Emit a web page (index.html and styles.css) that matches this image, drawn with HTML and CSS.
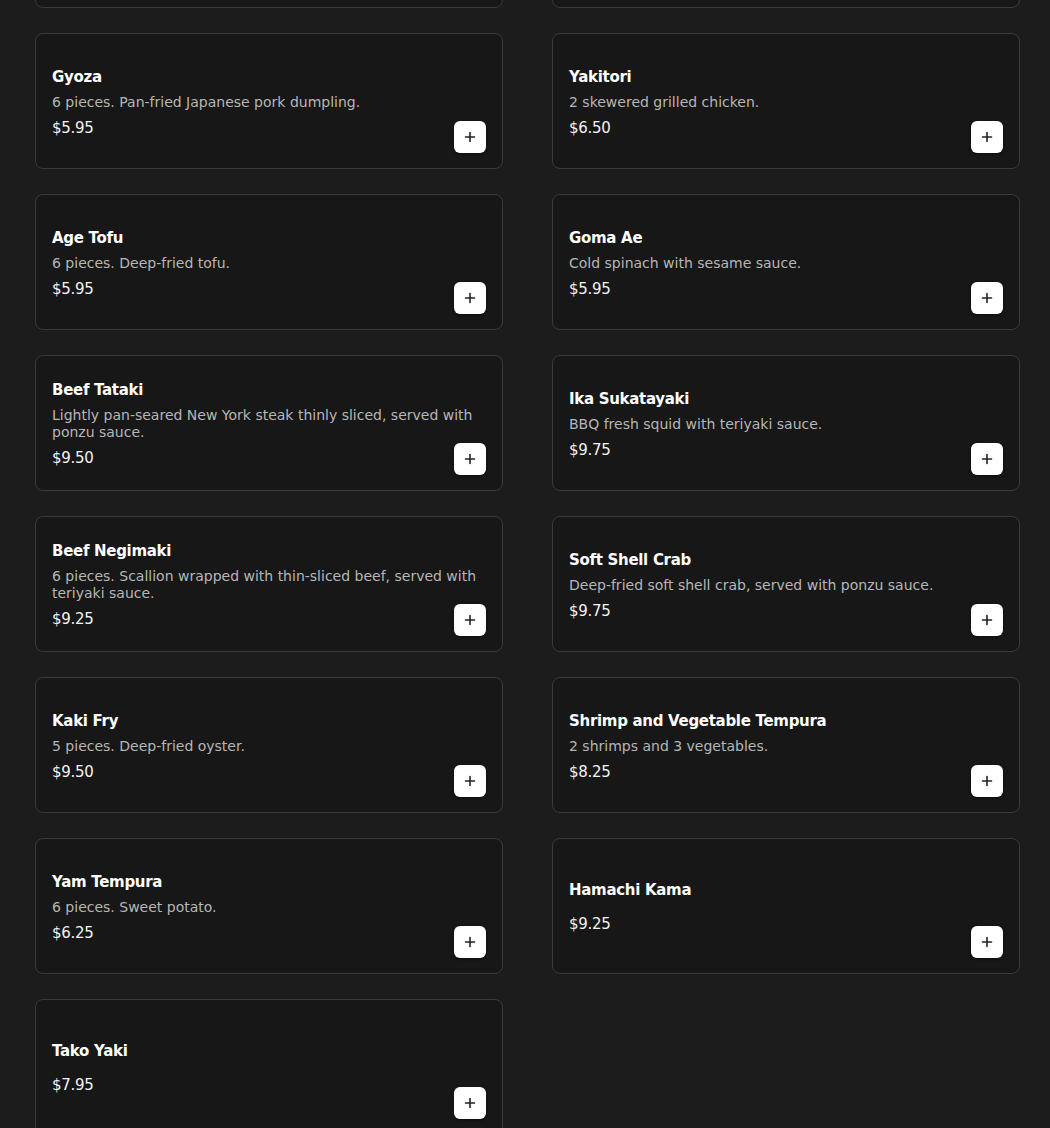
FILE: index.html
```html
<!DOCTYPE html>
<html lang="en">
<head>
<meta charset="utf-8">
<title>Menu</title>
<link rel="stylesheet" href="styles.css">
</head>
<body>
<main class="menu">
  <div class="grid">
    <article class="card" aria-hidden="true"></article>
    <article class="card" aria-hidden="true"></article>

    <article class="card"><div class="info"><h3 class="name">Gyoza</h3><p class="desc">6 pieces. Pan-fried Japanese pork dumpling.</p><div class="price">$5.95</div></div><button class="add" aria-label="Add"><svg viewBox="0 0 12 12" width="12" height="12"><path d="M6 1.5v9M1.5 6h9" stroke="#222" stroke-width="1.6" stroke-linecap="round"/></svg></button></article>
    <article class="card"><div class="info"><h3 class="name">Yakitori</h3><p class="desc">2 skewered grilled chicken.</p><div class="price">$6.50</div></div><button class="add" aria-label="Add"><svg viewBox="0 0 12 12" width="12" height="12"><path d="M6 1.5v9M1.5 6h9" stroke="#222" stroke-width="1.6" stroke-linecap="round"/></svg></button></article>

    <article class="card"><div class="info"><h3 class="name">Age Tofu</h3><p class="desc">6 pieces. Deep-fried tofu.</p><div class="price">$5.95</div></div><button class="add" aria-label="Add"><svg viewBox="0 0 12 12" width="12" height="12"><path d="M6 1.5v9M1.5 6h9" stroke="#222" stroke-width="1.6" stroke-linecap="round"/></svg></button></article>
    <article class="card"><div class="info"><h3 class="name">Goma Ae</h3><p class="desc">Cold spinach with sesame sauce.</p><div class="price">$5.95</div></div><button class="add" aria-label="Add"><svg viewBox="0 0 12 12" width="12" height="12"><path d="M6 1.5v9M1.5 6h9" stroke="#222" stroke-width="1.6" stroke-linecap="round"/></svg></button></article>

    <article class="card"><div class="info"><h3 class="name">Beef Tataki</h3><p class="desc">Lightly pan-seared New York steak thinly sliced, served with ponzu sauce.</p><div class="price">$9.50</div></div><button class="add" aria-label="Add"><svg viewBox="0 0 12 12" width="12" height="12"><path d="M6 1.5v9M1.5 6h9" stroke="#222" stroke-width="1.6" stroke-linecap="round"/></svg></button></article>
    <article class="card"><div class="info"><h3 class="name">Ika Sukatayaki</h3><p class="desc">BBQ fresh squid with teriyaki sauce.</p><div class="price">$9.75</div></div><button class="add" aria-label="Add"><svg viewBox="0 0 12 12" width="12" height="12"><path d="M6 1.5v9M1.5 6h9" stroke="#222" stroke-width="1.6" stroke-linecap="round"/></svg></button></article>

    <article class="card"><div class="info"><h3 class="name">Beef Negimaki</h3><p class="desc">6 pieces. Scallion wrapped with thin-sliced beef, served with teriyaki sauce.</p><div class="price">$9.25</div></div><button class="add" aria-label="Add"><svg viewBox="0 0 12 12" width="12" height="12"><path d="M6 1.5v9M1.5 6h9" stroke="#222" stroke-width="1.6" stroke-linecap="round"/></svg></button></article>
    <article class="card"><div class="info"><h3 class="name">Soft Shell Crab</h3><p class="desc">Deep-fried soft shell crab, served with ponzu sauce.</p><div class="price">$9.75</div></div><button class="add" aria-label="Add"><svg viewBox="0 0 12 12" width="12" height="12"><path d="M6 1.5v9M1.5 6h9" stroke="#222" stroke-width="1.6" stroke-linecap="round"/></svg></button></article>

    <article class="card"><div class="info"><h3 class="name">Kaki Fry</h3><p class="desc">5 pieces. Deep-fried oyster.</p><div class="price">$9.50</div></div><button class="add" aria-label="Add"><svg viewBox="0 0 12 12" width="12" height="12"><path d="M6 1.5v9M1.5 6h9" stroke="#222" stroke-width="1.6" stroke-linecap="round"/></svg></button></article>
    <article class="card"><div class="info"><h3 class="name">Shrimp and Vegetable Tempura</h3><p class="desc">2 shrimps and 3 vegetables.</p><div class="price">$8.25</div></div><button class="add" aria-label="Add"><svg viewBox="0 0 12 12" width="12" height="12"><path d="M6 1.5v9M1.5 6h9" stroke="#222" stroke-width="1.6" stroke-linecap="round"/></svg></button></article>

    <article class="card"><div class="info"><h3 class="name">Yam Tempura</h3><p class="desc">6 pieces. Sweet potato.</p><div class="price">$6.25</div></div><button class="add" aria-label="Add"><svg viewBox="0 0 12 12" width="12" height="12"><path d="M6 1.5v9M1.5 6h9" stroke="#222" stroke-width="1.6" stroke-linecap="round"/></svg></button></article>
    <article class="card"><div class="info"><h3 class="name">Hamachi Kama</h3><p class="desc"></p><div class="price">$9.25</div></div><button class="add" aria-label="Add"><svg viewBox="0 0 12 12" width="12" height="12"><path d="M6 1.5v9M1.5 6h9" stroke="#222" stroke-width="1.6" stroke-linecap="round"/></svg></button></article>

    <article class="card"><div class="info"><h3 class="name">Tako Yaki</h3><p class="desc"></p><div class="price">$7.95</div></div><button class="add" aria-label="Add"><svg viewBox="0 0 12 12" width="12" height="12"><path d="M6 1.5v9M1.5 6h9" stroke="#222" stroke-width="1.6" stroke-linecap="round"/></svg></button></article>
  </div>
</main>
</body>
</html>
```
FILE: styles.css
```css
html, body {
  margin: 0;
  padding: 0;
  background: #1c1c1c;
  overflow: hidden;
}
body {
  font-family: "DejaVu Sans", "Noto Sans", sans-serif;
  color: #ffffff;
}
.menu {
  padding: 0 29px 0 35px;
  margin-top: -128px;
}
.grid {
  display: grid;
  grid-template-columns: 468px 468px;
  column-gap: 49px;
  row-gap: 25px;
}
.card {
  position: relative;
  box-sizing: border-box;
  height: 136px;
  border: 1px solid #3a3a3a;
  border-radius: 8px;
  background: #171717;
  padding: 18px 16px 16px;
  display: flex;
  align-items: center;
}
.info {
  display: flex;
  flex-direction: column;
  gap: 5px;
  width: 100%;
  min-width: 0;
}
.name {
  margin: 0;
  font-size: 15px;
  line-height: 24px;
  letter-spacing: -0.3px;
  font-weight: 700;
  color: #ffffff;
}
.desc {
  margin: 0;
  font-size: 14px;
  line-height: 17px;
  color: #b6b6b6;
}
.price {
  font-size: 15px;
  line-height: 24px;
  letter-spacing: -0.3px;
  color: #f2f2f2;
}
.add {
  position: absolute;
  right: 16px;
  bottom: 15px;
  width: 32px;
  height: 32px;
  border: none;
  border-radius: 6px;
  background: #ffffff;
  box-shadow: 0 1px 3px rgba(0,0,0,0.5);
  display: flex;
  align-items: center;
  justify-content: center;
  padding: 0;
  cursor: pointer;
}
```
